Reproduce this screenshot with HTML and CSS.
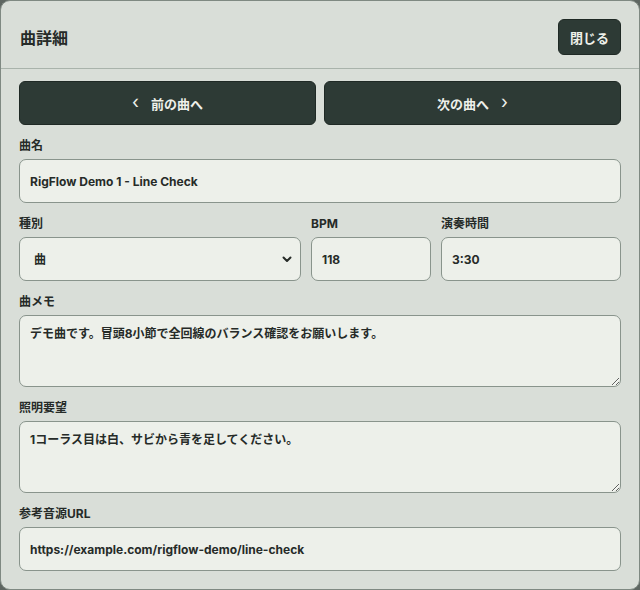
FILE: index.html
```html
<!DOCTYPE html>
<html lang="ja">
<head>
  <meta charset="UTF-8">
  <meta name="viewport" content="width=device-width, initial-scale=1.0">
  <title>曲詳細</title>
  <link rel="stylesheet" href="styles.css">
</head>
<body>
  <div class="modal">
    <div class="modal-header">
      <h2>曲詳細</h2>
      <button class="btn close-btn">閉じる</button>
    </div>
    <div class="modal-body">
      <div class="nav-buttons">
        <button class="btn nav-btn"><span class="chev">&lsaquo;</span>前の曲へ</button>
        <button class="btn nav-btn">次の曲へ<span class="chev">&rsaquo;</span></button>
      </div>

      <div class="field">
        <label>曲名</label>
        <input type="text" value="RigFlow Demo 1 - Line Check">
      </div>

      <div class="field-row">
        <div class="field">
          <label>種別</label>
          <div class="select-wrap">
            <select>
              <option>曲</option>
            </select>
            <svg class="select-arrow" width="12" height="12" viewBox="0 0 12 12">
              <path d="M2.5 4.5 L6 8 L9.5 4.5" fill="none" stroke="#262b28" stroke-width="2" stroke-linecap="round" stroke-linejoin="round"/>
            </svg>
          </div>
        </div>
        <div class="field">
          <label>BPM</label>
          <input type="text" value="118">
        </div>
        <div class="field">
          <label>演奏時間</label>
          <input type="text" value="3:30">
        </div>
      </div>

      <div class="field">
        <label>曲メモ</label>
        <textarea>デモ曲です。冒頭8小節で全回線のバランス確認をお願いします。</textarea>
      </div>

      <div class="field">
        <label>照明要望</label>
        <textarea>1コーラス目は白、サビから青を足してください。</textarea>
      </div>

      <div class="field">
        <label>参考音源URL</label>
        <input type="text" value="https://example.com/rigflow-demo/line-check">
      </div>
    </div>
  </div>
</body>
</html>
```

FILE: styles.css
```css
/* General Reset */
* {
  margin: 0;
  padding: 0;
  box-sizing: border-box;
}

body {
  font-family: 'Inter', 'Noto Sans CJK JP', sans-serif;
  background-color: #5e6661;
  color: #262b28;
}

.modal {
  width: 640px;
  height: 590px;
  background: #d9ded8;
  border: 1px solid #7f8982;
  border-radius: 10px;
  overflow: hidden;
}

.modal-header {
  display: flex;
  justify-content: space-between;
  align-items: center;
  padding: 18px 18px 13px 19px;
  border-bottom: 1px solid #a9b3ab;
}

.modal-header h2 {
  font-size: 16px;
  font-weight: 700;
}

.btn {
  font-family: inherit;
  background: #2d3a35;
  color: #eef0ea;
  border: 1px solid #1f2925;
  border-radius: 6px;
  font-weight: 700;
  cursor: pointer;
}

.close-btn {
  height: 36px;
  padding: 0 11px;
  font-size: 13px;
}

.modal-body {
  padding: 12px 18px;
  display: flex;
  flex-direction: column;
  gap: 13px;
}

.nav-buttons {
  display: grid;
  grid-template-columns: 1fr 1fr;
  gap: 8px;
}

.nav-btn {
  height: 44px;
  font-size: 13px;
  display: flex;
  align-items: center;
  justify-content: center;
  gap: 12px;
}

.chev {
  font-size: 18px;
  font-weight: 400;
  line-height: 1;
  margin-top: -3px;
}

.field {
  display: flex;
  flex-direction: column;
  gap: 5px;
}

.field label {
  font-size: 12px;
  font-weight: 700;
  line-height: 16px;
}

.field-row {
  display: grid;
  grid-template-columns: 1fr 120px 180px;
  gap: 10px;
}

input,
select,
textarea {
  font-family: inherit;
  font-size: 12px;
  font-weight: 700;
  color: #262b28;
  background: #edf0ea;
  border: 1px solid #89948c;
  border-radius: 7px;
  outline: none;
  width: 100%;
}

input {
  height: 44px;
  padding: 0 10px;
}

.select-wrap {
  position: relative;
}

select {
  appearance: none;
  height: 44px;
  padding: 0 14px;
}

.select-arrow {
  position: absolute;
  right: 8px;
  top: 16px;
  pointer-events: none;
}

textarea {
  height: 72px;
  padding: 9px 10px;
  line-height: 18px;
  resize: vertical;
}
```
